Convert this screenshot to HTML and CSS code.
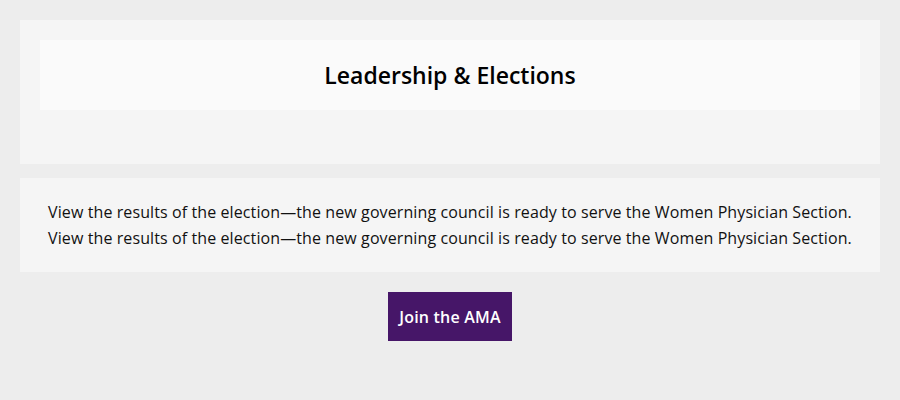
FILE: index.html
```html
<!DOCTYPE html>
<html>
<head>
<meta charset="utf-8">
<link rel="stylesheet" href="styles.css">
</head>
<body>
<div class="page">
  <section class="card hero">
    <div class="hero-head">
      <h1 class="title">Leadership &amp; Elections</h1>
    </div>
  </section>
  <section class="card intro">
    <p class="intro-text">View the results of the election—the new governing council is ready to serve the Women Physician Section.</p>
    <p class="intro-text">View the results of the election—the new governing council is ready to serve the Women Physician Section.</p>
  </section>
  <div class="cta">
    <a class="btn" href="#">Join the AMA</a>
  </div>
</div>
</body>
</html>
```

FILE: styles.css
```css
html, body {
  margin: 0;
  padding: 0;
  background: #ededed;
}
body {
  font-family: "Open Sans", "Liberation Sans", sans-serif;
  color: #111;
}
.page {
  padding: 20px;
  display: flex;
  flex-direction: column;
}
.card {
  background: #f5f5f5;
}
.hero {
  padding: 20px 20px 54px;
}
.hero-head {
  background: #fafafa;
  height: 70px;
  display: flex;
  align-items: center;
  justify-content: center;
}
.title {
  margin: 0;
  font-size: 23px;
  font-weight: 600;
  color: #000;
  letter-spacing: 0;
}
.intro {
  margin-top: 14px;
  padding: 21px 20px;
  text-align: center;
}
.intro-text {
  margin: 0;
  font-size: 16px;
  line-height: 26px;
  letter-spacing: 0.1px;
}
.cta {
  display: flex;
  justify-content: center;
  margin-top: 20px;
}
.btn {
  display: flex;
  align-items: center;
  justify-content: center;
  width: 124px;
  height: 49px;
  background: #461668;
  color: #fff;
  font-weight: 600;
  font-size: 16px;
  letter-spacing: 0.2px;
  text-decoration: none;
}
```
